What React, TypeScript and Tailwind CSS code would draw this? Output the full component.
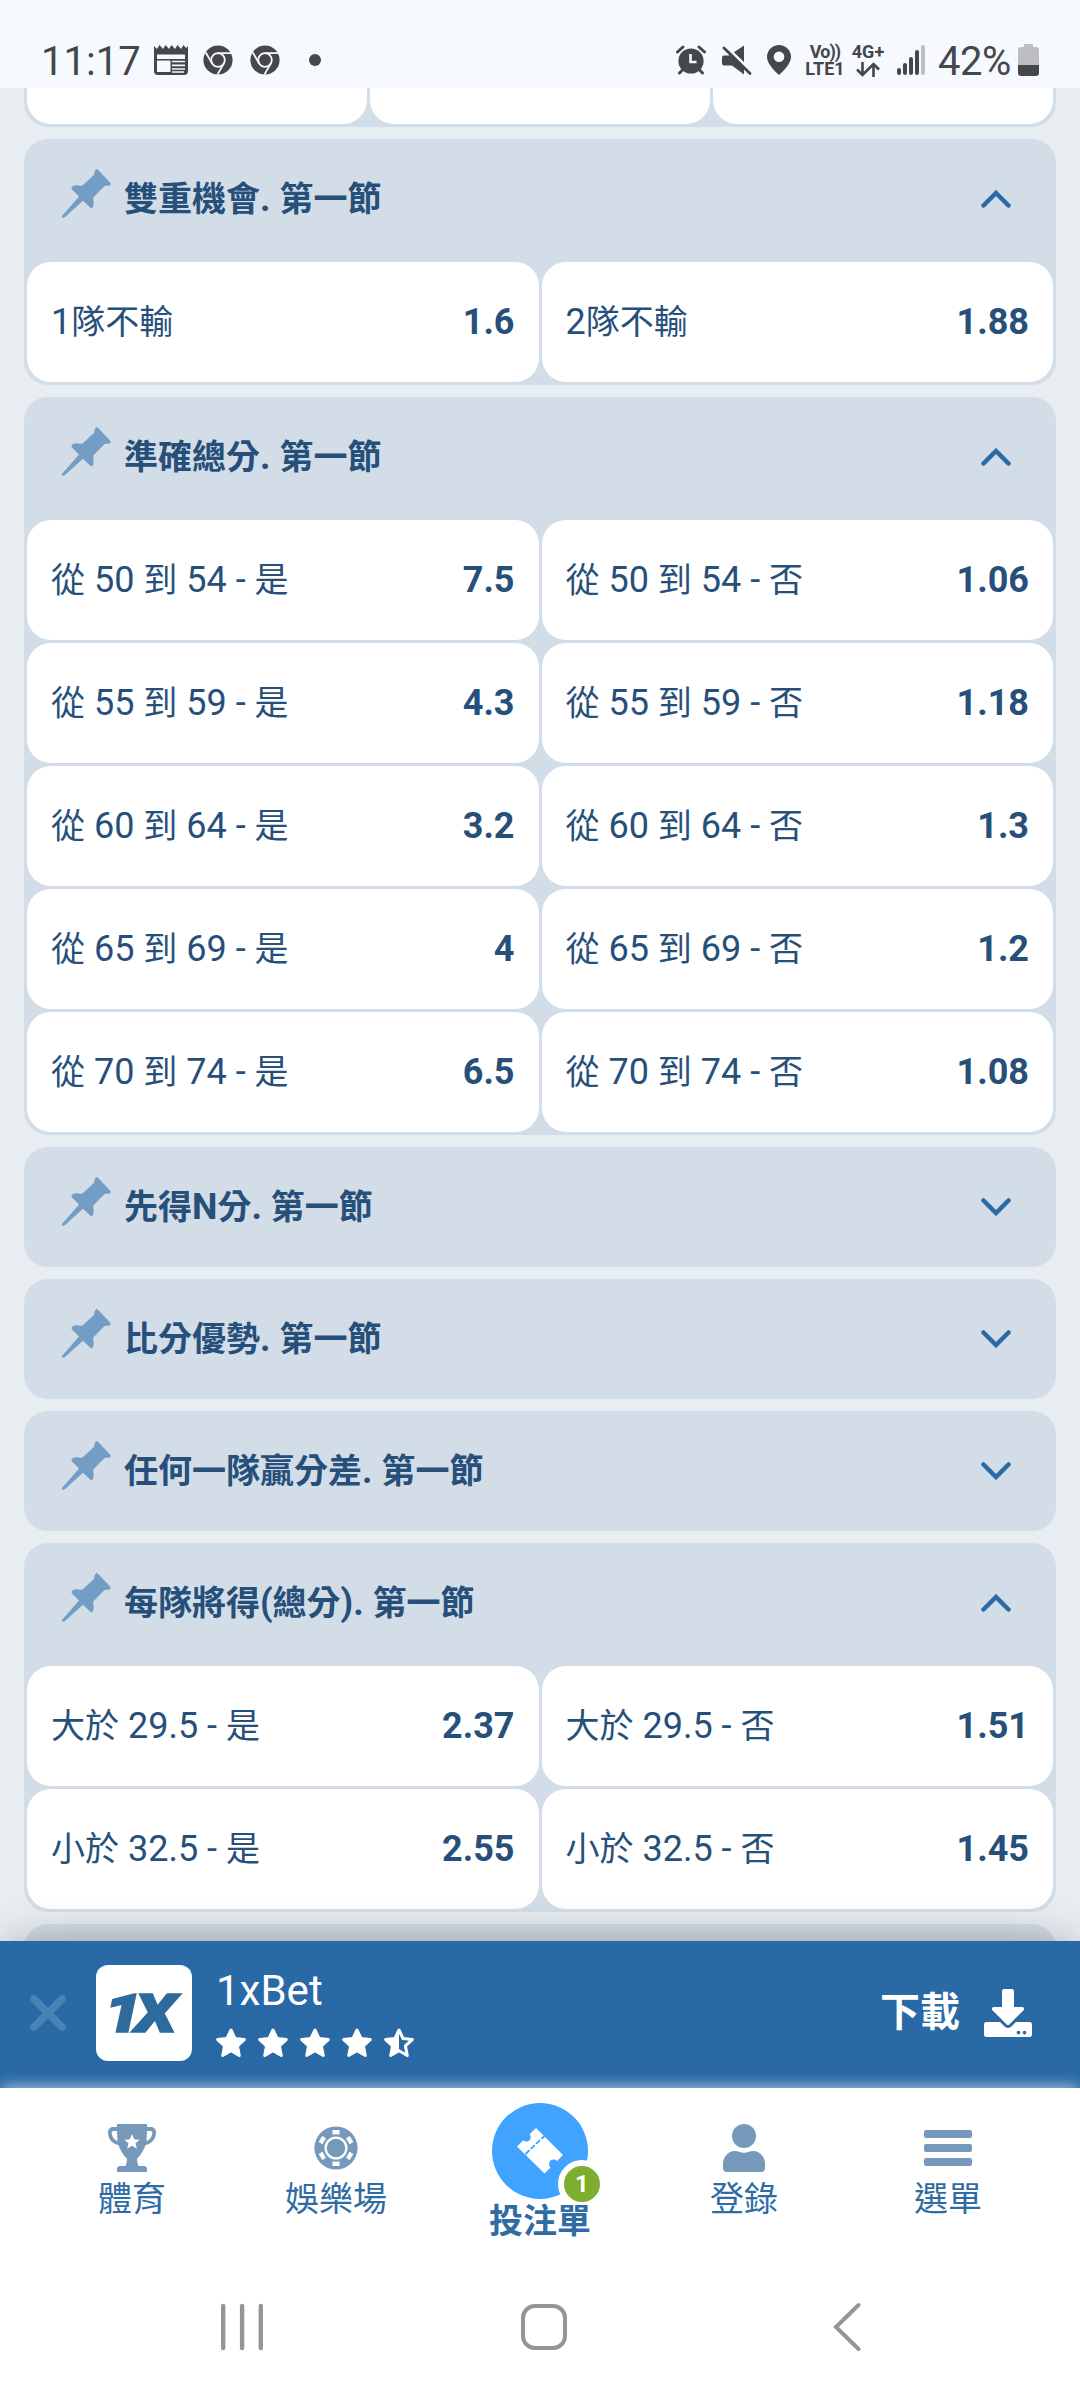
import type { ReactNode } from "react";
import { FaDownload } from "react-icons/fa";

type Odd = { label: string; value: string };
type Market = { title: string; open: boolean; odds: Odd[] };

const markets: Market[] = [
  {
    title: "雙重機會. 第一節",
    open: true,
    odds: [
      { label: "1隊不輸", value: "1.6" },
      { label: "2隊不輸", value: "1.88" },
    ],
  },
  {
    title: "準確總分. 第一節",
    open: true,
    odds: [
      { label: "從 50 到 54 - 是", value: "7.5" },
      { label: "從 50 到 54 - 否", value: "1.06" },
      { label: "從 55 到 59 - 是", value: "4.3" },
      { label: "從 55 到 59 - 否", value: "1.18" },
      { label: "從 60 到 64 - 是", value: "3.2" },
      { label: "從 60 到 64 - 否", value: "1.3" },
      { label: "從 65 到 69 - 是", value: "4" },
      { label: "從 65 到 69 - 否", value: "1.2" },
      { label: "從 70 到 74 - 是", value: "6.5" },
      { label: "從 70 到 74 - 否", value: "1.08" },
    ],
  },
  { title: "先得N分. 第一節", open: false, odds: [] },
  { title: "比分優勢. 第一節", open: false, odds: [] },
  { title: "任何一隊贏分差. 第一節", open: false, odds: [] },
  {
    title: "每隊將得(總分). 第一節",
    open: true,
    odds: [
      { label: "大於 29.5 - 是", value: "2.37" },
      { label: "大於 29.5 - 否", value: "1.51" },
      { label: "小於 32.5 - 是", value: "2.55" },
      { label: "小於 32.5 - 否", value: "1.45" },
    ],
  },
];

// Latin runs are set slightly larger than the Chinese glyphs around them
function MixedText({ text }: { text: string }) {
  return (
    <>
      {text.split(/([ -~]+)/).map((part, i) =>
        i % 2 === 1 ? (
          <span key={i} className="whitespace-pre text-[36px]">{part}</span>
        ) : (
          part
        )
      )}
    </>
  );
}

function ChromeIcon() {
  return (
    <svg viewBox="0 0 30 30" className="h-[30px] w-[30px]">
      <circle cx="15" cy="15" r="14.6" fill="#46474a" />
      <circle cx="15" cy="15" r="6.8" fill="none" stroke="#f6f9fe" strokeWidth="1.8" />
      <path d="M15 8.2H28M9.1 18.4L2.6 7.2M20.9 18.4L14.4 29.6" stroke="#f6f9fe" strokeWidth="1.8" fill="none" />
    </svg>
  );
}

function StatusBar() {
  return (
    <header className="flex h-[88px] shrink-0 items-start justify-between bg-[#f6f9fe] pl-[41px] pr-[41px] pt-[36px] text-[#46474a]">
      <div className="flex h-12 items-center">
        <span className="mt-[3px] w-[113px] text-[40px] leading-none">11:17</span>
        <svg viewBox="0 0 34 30" className="h-[30px] w-[34px]" fill="#46474a">
          <path d="M0 1l3 3 2.5-4L9 4l2.5-4L15 4l2.5-4L21 4l2.5-4L27 4l2.5-4L32 3l2-2V26a4 4 0 0 1-4 4H4a4 4 0 0 1-4-4z" />
          <path d="M3 9.5h28v4.5H3zM3 15.5h13.5V27H3z" fill="#f6f9fe" />
          <path d="M18 16.5h13M18 20.3h13M18 24h13M18 27h12" stroke="#f6f9fe" strokeWidth="1.7" />
        </svg>
        <span className="ml-[15px]"><ChromeIcon /></span>
        <span className="ml-[17px]"><ChromeIcon /></span>
        <span className="ml-[29px] h-3 w-3 rounded-full bg-[#46474a]" />
      </div>
      <div className="flex h-12 items-center">
        <svg viewBox="0 0 30 30" className="-ml-px mr-px h-[30px] w-[30px]">
          <circle cx="15" cy="16" r="12.6" fill="#46474a" />
          <path d="M1.5 7L7 2M28.5 7L23 2M6.5 25L3.5 28M23.5 25l3 3" stroke="#46474a" strokeWidth="3" strokeLinecap="round" />
          <path d="M14.5 9v8h6" stroke="#f6f9fe" strokeWidth="2.6" fill="none" />
        </svg>
        <svg viewBox="0 0 30 30" className="ml-[15px] h-[30px] w-[30px]">
          <path d="M0 12.5a2 2 0 0 1 2-2H7l15-10V29.5L10 20.5H2a2 2 0 0 1-2-2z" fill="#46474a" />
          <path d="M3.5 1L31 28" stroke="#f6f9fe" strokeWidth="3" />
          <path d="M2 3L28 28.5" stroke="#46474a" strokeWidth="2.8" strokeLinecap="round" />
        </svg>
        <svg viewBox="0 0 24 30" className="ml-[15px] h-[30px] w-6" fill="#46474a">
          <path fillRule="evenodd" d="M12 0a12 12 0 0 1 12 12C24 18.5 16.5 26 12 30 7.5 26 0 18.5 0 12A12 12 0 0 1 12 0zm0 6.5a5.3 5.3 0 1 0 0 10.6 5.3 5.3 0 0 0 0-10.6z" />
        </svg>
        <div className="ml-[14px] flex w-[40px] flex-col items-center text-[18px] font-bold leading-[17px]">
          <span className="tracking-tighter">Vo))</span>
          <span>LTE1</span>
        </div>
        <div className="ml-[5px] flex w-[36px] flex-col items-center">
          <span className="text-[18px] font-bold leading-[17px]">4G+</span>
          <svg viewBox="0 0 24 15" className="mt-[2px] h-[15px] w-6" fill="none" stroke="#46474a" strokeWidth="2.6">
            <path d="M6.5 0v13M1 7.5l5.5 5.5L12 7.5M17.5 15V2M12 7.5L17.5 2 23 7.5" />
          </svg>
        </div>
        <div className="ml-[11px] flex h-[30px] items-end gap-[2px]">
          <span className="h-[7px] w-1 rounded-sm bg-[#46474a]" />
          <span className="h-[12px] w-1 rounded-sm bg-[#46474a]" />
          <span className="h-[18px] w-1 rounded-sm bg-[#46474a]" />
          <span className="h-[25px] w-1 rounded-sm bg-[#46474a]" />
          <span className="h-[30px] w-1 rounded-sm bg-[#bcbec2]" />
        </div>
        <span className="ml-[13px] mt-[3px] w-[80px] text-[40px] leading-none tracking-[-0.5px]">42%</span>
        <svg viewBox="0 0 21 32" className="h-8 w-[21px]">
          <path d="M6 0h9v3h3a3 3 0 0 1 3 3v15H0V6a3 3 0 0 1 3-3h3z" fill="#bcbec2" />
          <path d="M0 21h21v8a3 3 0 0 1-3 3H3a3 3 0 0 1-3-3z" fill="#46474a" />
        </svg>
      </div>
    </header>
  );
}

function PinIcon() {
  return (
    <svg viewBox="0 0 50 49" className="h-[49px] w-[50px]" fill="#739dc4">
      <path d="M35 .5c1-.7 2 0 3 1.2L49 13.5c1.2 1.4.8 2.7-.8 3-1.7.4-3.2 0-4.7.5L32.5 28.2c-.6 2.2.2 4.7.1 7 0 2.5-1.2 4.6-3 3.8L22 31.8 4 48c-1.5 1.2-4 1-3-1L18 27.5l-7-7c-1.2-1.7 0-3.3 2.5-4 2.5-.6 5.5.6 8 0L33 6c.6-1.7 0-4 2-5.5z" />
    </svg>
  );
}

function MarketPanel({ market }: { market: Market }) {
  return (
    <section className="rounded-3xl bg-[#d3dde7]">
      <div className="flex h-[120px] items-center pl-[37px] pr-[45px]">
        <span className="mb-3"><PinIcon /></span>
        <h2 className="ml-[13px] flex-1 text-[34px] font-bold leading-none text-[#264f7a]">
          <MixedText text={market.title} />
        </h2>
        <svg viewBox="0 0 30 18" className={market.open ? "h-[18px] w-[30px]" : "h-[18px] w-[30px] rotate-180"}>
          <path d="M2.5 15.5L15 3l12.5 12.5" fill="none" stroke="#2a6ba5" strokeWidth="4.5" strokeLinecap="round" />
        </svg>
      </div>
      {market.open && (
        <div className="grid grid-cols-2 gap-[3px] p-[3px]">
          {market.odds.map((odd) => (
            <div
              key={odd.label}
              className="flex h-[120px] items-center justify-between rounded-3xl bg-white px-6 text-[34px] leading-none text-[#264f7a]"
            >
              <span><MixedText text={odd.label} /></span>
              <span className="text-[36px] font-bold">{odd.value}</span>
            </div>
          ))}
        </div>
      )}
    </section>
  );
}

function Star({ half = false }: { half?: boolean }) {
  return (
    <svg viewBox="0 0 30 30" className="h-[30px] w-[30px]" fill={half ? "none" : "#fff"} stroke="#fff" strokeWidth="3" strokeLinejoin="round">
      <path d="M15 2l4 8.500 9.300 1.100-6.900 6.300 1.900 9.600L15 22.800l-8.300 4.700 1.900-9.600-6.900-6.300L11 10.500z" />
      {half && <path d="M15 2v20.800l-8.300 4.700 1.900-9.600-6.900-6.300L11 10.500z" fill="#fff" stroke="none" />}
    </svg>
  );
}

function Logo() {
  return (
    <svg viewBox="0 0 96 96" className="h-24 w-24">
      <text
        x="8"
        y="67"
        textLength="65"
        lengthAdjust="spacingAndGlyphs"
        fontFamily="Roboto"
        fontWeight="900"
        fontStyle="italic"
        fontSize="53"
        letterSpacing="-6"
        fill="#2f6a9c"
        stroke="#2f6a9c"
        strokeWidth="1.5"
      >
        1X
      </text>
    </svg>
  );
}

function AppBanner() {
  return (
    <div className="relative flex h-[147px] shrink-0 items-center bg-[#2869a6] pb-[3px] pl-[29px] pr-12 text-white shadow-[0_0_48px_-10px_rgba(0,0,0,0.45)]">
      <svg viewBox="0 0 38 38" className="h-[38px] w-[38px]">
        <path d="M5 5l28 28M33 5L5 33" stroke="#4982b5" strokeWidth="7.5" strokeLinecap="round" />
      </svg>
      <div className="ml-[29px] overflow-hidden rounded-xl bg-white">
        <Logo />
      </div>
      <div className="ml-6 flex flex-col">
        <span className="text-[42px] leading-[46px]">1xBet</span>
        <div className="mt-[14px] flex gap-3">
          <Star />
          <Star />
          <Star />
          <Star />
          <Star half />
        </div>
      </div>
      <span className="ml-auto text-[40px] font-bold leading-none">下載</span>
      <FaDownload className="ml-6 h-12 w-12" />
    </div>
  );
}

function TrophyIcon() {
  return (
    <svg viewBox="0 0 48 48" className="h-12 w-12" fill="#7699bb">
      <path d="M9 0h30v3h4a5 5 0 0 1 5 5c0 7-4 12-10.5 13-2 6-5.5 11-8.5 13.5.2 3.5.5 6 1.5 7.5H36a3 3 0 0 1 3 3v3H9v-3a3 3 0 0 1 3-3h5.5c1-1.5 1.3-4 1.5-7.5-3-2.5-6.5-7.5-8.5-13.5C4 20 0 15 0 8a5 5 0 0 1 5-5h4z" />
      <path d="M9 7H5.5C4 7 3.5 8 3.7 9.5 4.2 13 6 15.5 9.5 17zM39 7h3.5c1.5 0 2 1 1.8 2.5C43.8 13 42 15.5 38.5 17zM24 10l2.2 5.3 5.5.4-4.2 3.6 1.4 5.5L24 21.8l-4.9 3 1.4-5.5-4.2-3.6 5.5-.4z" fill="#fff" />
    </svg>
  );
}

function ChipIcon() {
  return (
    <svg viewBox="0 0 44 44" className="h-11 w-11">
      <circle cx="22" cy="22" r="21.6" fill="#7699bb" />
      <circle cx="22" cy="22" r="10.4" fill="none" stroke="#fff" strokeWidth="2.3" />
      {[0, 60, 120, 180, 240, 300].map((angle) => (
        <rect key={angle} x="18.5" y="4" width="7" height="4.4" fill="#fff" transform={`rotate(${angle} 22 22)`} />
      ))}
    </svg>
  );
}

function TicketIcon() {
  return (
    <svg viewBox="0 0 46 46" className="h-[46px] w-[46px]">
      <path d="M0 18.5L19 0l27 27-18.5 18.5z" fill="#fff" />
      <circle cx="9.5" cy="9.3" r="4.2" fill="#3fa3ff" />
      <circle cx="36.5" cy="36" r="4.5" fill="#3fa3ff" />
      <path d="M8.5 26L27.5 8" stroke="#3fa3ff" strokeWidth="1.8" strokeDasharray="5.5 1.8" />
    </svg>
  );
}

function NavItem({ icon, label }: { icon: ReactNode; label: string }) {
  return (
    <div className="flex w-[204px] flex-col items-center pt-9">
      <span className="flex h-12 items-center">{icon}</span>
      <span className="mt-[10px] text-[34px] leading-[34px]">{label}</span>
    </div>
  );
}

function BottomNav() {
  return (
    <nav className="relative flex h-[172px] shrink-0 justify-center bg-white text-[#2f6ca4] shadow-[0_-3px_14px_-2px_rgba(215,222,230,0.85)]">
      <NavItem icon={<TrophyIcon />} label="體育" />
      <NavItem icon={<ChipIcon />} label="娛樂場" />
      <div className="flex w-[204px] flex-col items-center pt-[15px]">
        <div className="relative flex h-24 w-24 items-center justify-center rounded-full bg-[#3fa3ff]">
          <TicketIcon />
          <span className="absolute -bottom-[9px] -right-[18px] flex h-12 w-12 items-center justify-center rounded-full border-[6px] border-white bg-[#7fad2d] text-[24px] font-bold leading-none text-white">
            1
          </span>
        </div>
        <span className="relative z-10 mt-[5px] text-[34px] font-bold leading-[34px]">投注單</span>
      </div>
      <NavItem
        icon={
          <svg viewBox="0 0 42 48" className="h-12 w-[42px]" fill="#7699bb">
            <circle cx="21" cy="12" r="12" />
            <path d="M12 27c3 0 5 1.7 9 1.7S27 27 30 27c7 0 12 6 12 13v4a4 4 0 0 1-4 4H4a4 4 0 0 1-4-4v-4c0-7 5-13 12-13z" />
          </svg>
        }
        label="登錄"
      />
      <NavItem
        icon={
          <span className="flex w-12 flex-col gap-[6px]">
            <span className="h-2 rounded-xs bg-[#7699bb]" />
            <span className="h-2 rounded-xs bg-[#7699bb]" />
            <span className="h-2 rounded-xs bg-[#7699bb]" />
          </span>
        }
        label="選單"
      />
    </nav>
  );
}

function SystemNav() {
  return (
    <div className="relative flex flex-1 items-start bg-white pl-[220px] pt-[43px]">
      <svg viewBox="0 0 44 48" className="h-12 w-11">
        <path d="M3.2 3v42M22.1 3v42M40.8 3v42" stroke="#959595" strokeWidth="4.4" strokeLinecap="round" />
      </svg>
      <span className="ml-[257px] mt-px h-[46px] w-[46px] rounded-[14px] border-4 border-[#959595]" />
      <svg viewBox="0 0 28 50" className="ml-[266px] -mt-px h-[50px] w-7">
        <path d="M25.5 3L3 25l22.5 22" fill="none" stroke="#959595" strokeWidth="4" strokeLinecap="round" />
      </svg>
    </div>
  );
}

export default function App() {
  return (
    <div
      lang="zh-Hant"
      className="flex h-[2400px] w-[1080px] flex-col overflow-hidden bg-[#e8edf2] font-[Roboto,'Noto_Sans_CJK_TC',sans-serif]"
    >
      <StatusBar />
      <main className="flex h-[1853px] shrink-0 flex-col gap-3 overflow-hidden px-6">
        {/* tail of the previous market, scrolled under the status bar */}
        <section className="-mt-[84px] grid shrink-0 grid-cols-3 gap-[3px] rounded-3xl bg-[#d3dde7] px-[3px] pb-[3px]">
          <div className="h-[120px] rounded-3xl bg-white" />
          <div className="h-[120px] rounded-3xl bg-white" />
          <div className="h-[120px] rounded-3xl bg-white" />
        </section>
        {markets.map((market) => (
          <MarketPanel key={market.title} market={market} />
        ))}
        <section className="h-[120px] shrink-0 rounded-3xl bg-[#d3dde7]" />
      </main>
      <AppBanner />
      <BottomNav />
      <SystemNav />
    </div>
  );
}
